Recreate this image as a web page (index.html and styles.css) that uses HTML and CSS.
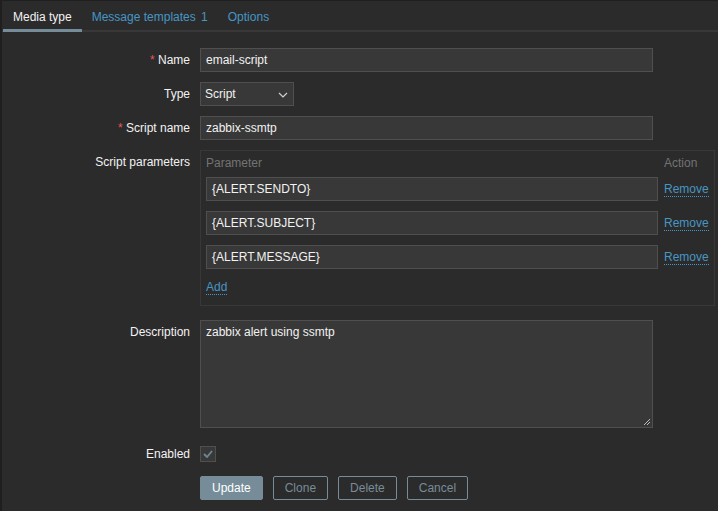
FILE: index.html
```html
<!DOCTYPE html>
<html>
<head>
<meta charset="utf-8">
<link rel="stylesheet" href="styles.css">
</head>
<body>
<div class="page">
  <div class="tabs">
    <div class="tab active">Media type</div>
    <div class="tab">Message templates <span class="count">1</span></div>
    <div class="tab">Options</div>
  </div>
  <div class="form">
    <div class="row">
      <div class="label"><span class="req">*</span> Name</div>
      <div class="field"><div class="input wide">email-script</div></div>
    </div>
    <div class="row">
      <div class="label">Type</div>
      <div class="field"><div class="input select">Script
        <svg class="chev" width="10" height="6" viewBox="0 0 10 6"><path d="M1 1l4 4 4-4" fill="none" stroke="#d0d0d0" stroke-width="1.2"/></svg></div></div>
    </div>
    <div class="row">
      <div class="label"><span class="req">*</span> Script name</div>
      <div class="field"><div class="input wide">zabbix-ssmtp</div></div>
    </div>
    <div class="row">
      <div class="label">Script parameters</div>
      <div class="field">
        <div class="params">
          <div class="phead"><span class="pcol">Parameter</span><span>Action</span></div>
          <div class="prow"><div class="input pinput">{ALERT.SENDTO}</div><a class="link">Remove</a></div>
          <div class="prow"><div class="input pinput">{ALERT.SUBJECT}</div><a class="link">Remove</a></div>
          <div class="prow"><div class="input pinput">{ALERT.MESSAGE}</div><a class="link">Remove</a></div>
          <div class="padd"><a class="link">Add</a></div>
        </div>
      </div>
    </div>
    <div class="row desc">
      <div class="label">Description</div>
      <div class="field"><div class="input textarea">zabbix alert using ssmtp
        <svg class="grip" width="8" height="8" viewBox="0 0 8 8"><path d="M7 1L1 7M7 4L4 7" stroke="#bbb" stroke-width="1"/></svg></div></div>
    </div>
    <div class="row enabled">
      <div class="label">Enabled</div>
      <div class="field"><div class="check"><svg width="10" height="8" viewBox="0 0 10 8"><path d="M1 4l3 3 5-6" fill="none" stroke="#6e8794" stroke-width="1.8"/></svg></div></div>
    </div>
    <div class="row buttons">
      <div class="label"></div>
      <div class="field btns">
        <button class="btn primary">Update</button>
        <button class="btn">Clone</button>
        <button class="btn">Delete</button>
        <button class="btn">Cancel</button>
      </div>
    </div>
  </div>
</div>
</body>
</html>
```
FILE: styles.css
```css
html, body { margin: 0; padding: 0; background: #2b2b2b; }
body { font-family: "Liberation Sans", Arial, sans-serif; font-size: 12px; color: #f2f2f2; }
.page {
  width: 716px; height: 510px;
  border-left: 2px solid #1f1f1f;
  border-top: 1px solid #1f1f1f;
  background: #2b2b2b;
  box-sizing: content-box;
}
.tabs {
  display: flex;
  height: 29px;
  border-bottom: 2px solid #383838;
  padding-left: 1px;
}
.tab {
  padding: 9px 10px 0;
  color: #4796c4;
  height: 29px;
  box-sizing: border-box;
}
.tab.active {
  color: #f2f2f2;
  border-bottom: 3px solid #768d99;
  height: 31px;
}
.count { color: #4796c4; margin-left: 2px; }
.form { padding-top: 16px; }
.row { display: flex; margin-bottom: 10px; }
.label {
  width: 188px;
  text-align: right;
  padding-right: 10px;
  line-height: 24px;
  flex: none;
}
.req { color: #e45959; }
.field { flex: none; }
.input {
  box-sizing: border-box;
  height: 24px;
  background: #383838;
  border: 1px solid #4f4f4f;
  color: #f2f2f2;
  padding: 0 5px;
  line-height: 22px;
  position: relative;
}
.wide { width: 453px; }
.select { width: 94px; padding-left: 4px; }
.chev { position: absolute; right: 5px; top: 9px; }
.params {
  width: 515px;
  box-sizing: border-box;
  border: 1px solid #383838;
  padding: 4px 5px 11px;
}
.phead {
  display: flex;
  color: #737373;
  line-height: 16px;
  margin-bottom: 6px;
}
.pcol { width: 458px; }
.prow { display: flex; align-items: center; margin-bottom: 10px; }
.pinput { width: 452px; }
.link {
  color: #4796c4;
  border-bottom: 1px dotted #4796c4;
  line-height: 13px;
  margin-left: 6px;
}
.prow .link { margin-top: 2px; }
.padd { padding-top: 1px; line-height: 14px; }
.padd .link { margin-left: 0; }
.desc { margin-top: 14px; margin-bottom: 18px; }
.textarea { width: 453px; height: 108px; line-height: 14px; padding-top: 4px; }
.grip { position: absolute; right: 1px; bottom: 1px; }
.enabled { margin-bottom: 13px; }
.enabled .label { line-height: 18px; margin-top: -1px; }
.check {
  width: 16px; height: 16px; box-sizing: border-box;
  border: 1px solid #4f4f4f; background: #383838;
  display: flex; align-items: center; justify-content: center;
}
.btns { display: flex; gap: 10px; }
.btn {
  font-family: "Liberation Sans", Arial, sans-serif;
  font-size: 12px;
  height: 24px;
  background: transparent;
  border: 1px solid #768d99;
  color: #768d99;
  border-radius: 2px;
  padding: 0 11px;
  margin: 0;
}
.btn.primary { background: #768d99; color: #fff; }
```
